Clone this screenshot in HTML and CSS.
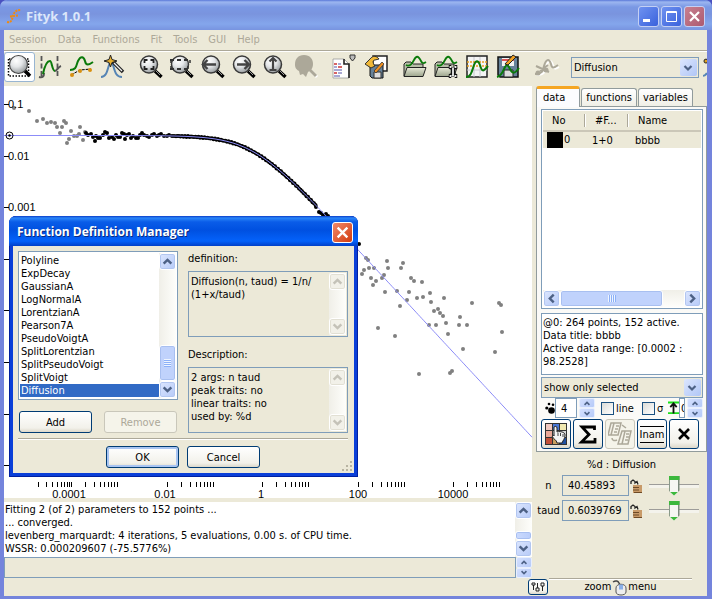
FILE: index.html
```html
<!DOCTYPE html>
<html lang="en">
<head>
<meta charset="utf-8">
<title>Fityk 1.0.1</title>
<link rel="stylesheet" href="styles.css">
</head>
<body>
<svg class="defs" aria-hidden="true">
  <defs>
    <radialGradient id="glass" cx="38%" cy="30%" r="75%">
      <stop offset="0" stop-color="#fff"/><stop offset=".45" stop-color="#e4e6e8"/><stop offset="1" stop-color="#8f9496"/>
    </radialGradient>
    <linearGradient id="folder" x1="0" y1="0" x2="0" y2="1">
      <stop offset="0" stop-color="#e8ead8"/><stop offset="1" stop-color="#9ca48c"/>
    </linearGradient>
    <symbol id="lens" viewBox="0 0 24 24">
      <path d="M16 16l6.500 6" stroke="#000" stroke-width="3.500"/>
      <path d="M17 16l4 4" stroke="#999" stroke-width="1"/>
      <circle cx="10" cy="9.500" r="8.500" fill="url(#glass)" stroke="#3a3a3a" stroke-width="1.500"/>
    </symbol>
    <symbol id="folder-icon" viewBox="0 0 24 24">
      <path d="M1 21V9l2-2h5l2 2h10v3" fill="#b8bea8" stroke="#222"/>
      <path d="M1 21.500L4 12.500h19l-3 9z" fill="url(#folder)" stroke="#222"/>
      <path d="M3 10c4 2 6-1 8-5s4-5 7 1c1 2 2 3 5 1" fill="none" stroke="#0a7a0a" stroke-width="1.800"/>
    </symbol>
    <symbol id="up" viewBox="0 0 10 10"><path d="M1.500 7L5 3.500 8.500 7" fill="none" stroke="currentColor" stroke-width="2.200"/></symbol>
    <symbol id="down" viewBox="0 0 10 10"><path d="M1.500 3L5 6.500 8.500 3" fill="none" stroke="currentColor" stroke-width="2.200"/></symbol>
    <symbol id="left" viewBox="0 0 10 10"><path d="M7 1.500L3.500 5 7 8.500" fill="none" stroke="currentColor" stroke-width="2.200"/></symbol>
    <symbol id="right" viewBox="0 0 10 10"><path d="M3 1.500L6.500 5 3 8.500" fill="none" stroke="currentColor" stroke-width="2.200"/></symbol>
    <symbol id="cross" viewBox="0 0 12 12"><path d="M1.500 1.500l9 9M10.500 1.500l-9 9" stroke="#fff" stroke-width="2.200"/></symbol>
    <symbol id="lock" viewBox="0 0 12 14">
      <path d="M1 5V2.500L3 1l2 1.500V4l2-1.500 1 3" fill="none" stroke="#222" stroke-width="1.300"/>
      <rect x="3" y="6" width="9" height="8" fill="#c89a68"/>
      <path d="M3 8.500h6M3 11h6M4 13.500h8" stroke="#6d4a26"/>
    </symbol>
  </defs>
</svg>

<div class="window">
  <header class="titlebar">
    <svg class="logo" viewBox="0 0 16 16"><path d="M1 14c5 1 5-3 6-6s2-6 8-6M4 8.500l8-1" fill="none" stroke="#f08a10" stroke-width="2" stroke-dasharray="2 1"/></svg>
    <h1>Fityk 1.0.1</h1>
    <button class="winbtn" aria-label="Minimize"><svg viewBox="0 0 19 19"><path d="M4 13.500h7" stroke="#fff" stroke-width="3"/></svg></button>
    <button class="winbtn" aria-label="Maximize"><svg viewBox="0 0 19 19"><path d="M4.500 4.500h10v10h-10zM4 5.500h11" fill="none" stroke="#fff"/></svg></button>
    <button class="winbtn winbtn-close" aria-label="Close"><svg viewBox="0 0 19 19"><path d="M5 5l9 9M14 5l-9 9" stroke="#fff" stroke-width="2.200"/></svg></button>
  </header>

  <nav class="menubar">
    <button disabled>Session</button><button disabled>Data</button><button disabled>Functions</button><button disabled>Fit</button><button disabled>Tools</button><button disabled>GUI</button><button disabled>Help</button>
  </nav>

  <div class="toolbar">
    <div class="group">
      <button class="tool pressed" aria-label="Zoom mode"><svg viewBox="0 0 24 24"><path d="M1.500 4v17h20V4z" fill="none" stroke="#000" stroke-width="1.500" stroke-dasharray="1.500 1.500"/><path d="M17 15l6 6" stroke="#000" stroke-width="3.500"/><circle cx="11.500" cy="9.500" r="9" fill="url(#glass)" stroke="#444" stroke-width="1.200"/></svg></button>
      <button class="tool" aria-label="Range mode"><svg viewBox="0 0 24 24"><path d="M3.500 1v22M19.500 1v22" stroke="#555" stroke-width="1.800" stroke-dasharray="5 2.500"/><path d="M1 22c4 1 5-1 5-4" fill="none" stroke="#555" stroke-width="2"/><path d="M5 19c2-10 5-13 7-13s2 10 5 10" fill="none" stroke="#0a7a0a" stroke-width="2"/><path d="M17 16c2 0 3-4 6-5" fill="none" stroke="#555" stroke-width="2"/></svg></button>
      <button class="tool" aria-label="Baseline mode"><svg viewBox="0 0 24 24"><path d="M2 20l9-5 11-1" fill="none" stroke="#000" stroke-dasharray="3 1"/><path d="M1 15c7 0 6-5 8-9 3-6 6-4 7 0 1 5 4 4 8 1" fill="none" stroke="#0a7a0a" stroke-width="2"/><circle cx="3" cy="20" r="2" fill="#d89010"/><circle cx="11" cy="16" r="2" fill="#d89010"/><circle cx="21" cy="15" r="2" fill="#d89010"/></svg></button>
      <button class="tool" aria-label="Add peak mode"><svg viewBox="0 0 24 24"><path d="M1 22c5 0 6-5 8-12 1-4 3-4 4 0 2 7 3 12 9 12" fill="none" stroke="#5685b5" stroke-width="2"/><path d="M13 7l10 10" stroke="#222" stroke-width="3.500"/><path d="M14 8l8 8" stroke="#eee" stroke-width="1.200"/><path d="M10.500 0l1.500 4.500 5 1.500-5 1.500-1.500 4.500L9 7.500 4 6l5-1.500z" fill="#e8b030" stroke="#222"/></svg></button>
    </div>
    <div class="group">
      <button class="tool" aria-label="Zoom all"><svg viewBox="0 0 24 24"><use href="#lens"/><path d="M5.500 8V5h3M11.500 5h3v3M14.500 11v3h-3M8.500 14h-3v-3" fill="none" stroke="#222" stroke-width="1.800"/></svg></button>
      <button class="tool" aria-label="Fit width"><svg viewBox="0 0 24 24"><use href="#lens"/><path d="M0 5h21M0 14h21" stroke="#333" stroke-width="1.800" stroke-dasharray="4 3"/><path d="M1 5v3M20 5v3M1 14v-3M18 14v-3" stroke="#333" stroke-width="1.500"/></svg></button>
      <button class="tool" aria-label="Scroll left"><svg viewBox="0 0 24 24"><use href="#lens"/><path d="M15 9.500H2M6.500 5L2 9.500 6.500 14" fill="none" stroke="#444" stroke-width="2.400"/></svg></button>
      <button class="tool" aria-label="Scroll right"><svg viewBox="0 0 24 24"><use href="#lens"/><path d="M5 9.500h12M12.500 5L17 9.500 12.500 14" fill="none" stroke="#444" stroke-width="2.400"/></svg></button>
      <button class="tool" aria-label="Fit height"><svg viewBox="0 0 24 24"><use href="#lens"/><path d="M10 3v12M6.500 6.500L10 3l3.500 3.500M6.500 15h7" fill="none" stroke="#444" stroke-width="2.200"/></svg></button>
      <button class="tool" aria-label="Previous zoom" disabled><svg viewBox="0 0 24 24"><path d="M16 15l7 7" stroke="#fff" stroke-width="3"/><path d="M16 15l6 6" stroke="#aca899" stroke-width="3"/><path d="M10 0c6 0 9 4 9 9s-3 7-5 8l-2 5-3-3-3 1-1-4c-4-2-4-5-4-7 0-5 3-9 9-9z" fill="#aca899"/></svg></button>
    </div>
    <div class="group">
      <button class="tool" aria-label="Run script"><svg viewBox="0 0 24 24"><path d="M0 4h11l5 5v14H0z" fill="#fff" stroke="#999" stroke-width=".8"/><path d="M11 4v5h5v14" fill="none" stroke="#222" stroke-width="1.600"/><path d="M1 9h3M5 12h4M1 18h3" stroke="#c33" stroke-width="1.500"/><path d="M5 9h3M1 12h3M1 15h8M5 18h4M1 21h6" stroke="#55a" stroke-width="1.200"/><path d="M17 0h5v3l-2.500 3L17 3z" fill="#bbb" stroke="#333"/></svg></button>
      <button class="tool" aria-label="Save session"><svg viewBox="0 0 24 24"><path d="M9 1h14v15H9z" fill="#fff" stroke="#222" stroke-width="1.500"/><path d="M6 10h13v13H8l-2-2z" fill="#67829a" stroke="#111"/><path d="M10 17h7v6h-7z" fill="#ddd" stroke="#333"/><path d="M1 9l5-5c3-4 7-3 9 0l-4 1c-3 0-2 4 0 6l-4 2z" fill="#f0b838" stroke="#333"/><path d="M10 16l8-9 2 2-8 9z" fill="#f09020" stroke="#333" stroke-width=".8"/></svg></button>
    </div>
    <div class="group">
      <button class="tool" aria-label="Load data"><svg viewBox="0 0 24 24"><use href="#folder-icon"/></svg></button>
      <button class="tool" aria-label="Load data with options"><svg viewBox="0 0 24 24"><use href="#folder-icon"/><path d="M16 10v3l2 1v5l-2 1v3M22 10v3l-2 1v5l2 1v3" fill="none" stroke="#111" stroke-width="2.500"/><path d="M19 12.500v9M16.500 11v2M21.500 11v2M16.500 20v2M21.500 20v2" stroke="#eee" stroke-width="1.800"/></svg></button>
      <button class="tool" aria-label="Edit data"><svg viewBox="0 0 24 24"><path d="M2 1h20v21H2z" fill="#f4f4f4" stroke="#222" stroke-width="1.500"/><path d="M2 15h20M9 2v20M15 2v20" stroke="#c8c8d0"/><path d="M2 7h20M2 11h20" stroke="#e8a020" stroke-width="1.500" stroke-dasharray="2 1"/><path d="M1 22c5 0 6-6 8-12 2-5 4-5 6 0 2 7 3 7 8 1" fill="none" stroke="#0a7a0a" stroke-width="2"/></svg></button>
      <button class="tool" aria-label="Save image"><svg viewBox="0 0 24 24"><path d="M2 2h20v20H4l-2-2z" fill="#67829a" stroke="#111" stroke-width="1.500"/><path d="M6 3h12v8H6z" fill="#f2f2f2"/><path d="M6 5h12" stroke="#d55" stroke-width="2"/><path d="M8 15h9v7H8z" fill="#ddd" stroke="#222"/><path d="M1 22c5-1 6-6 8-10 2-3 3-2 5 2s4 6 9-1" fill="none" stroke="#0a7a0a" stroke-width="2"/><path d="M9 9l8-9 3 2-8 8z" fill="#f0a020" stroke="#222"/></svg></button>
    </div>
    <div class="group">
      <button class="tool" aria-label="Automatic peak" disabled><svg viewBox="0 0 24 24"><path d="M2 20c8 0 8-4 9-8 2-7 5-8 7-2 1 5 3 4 6 2" fill="none" stroke="#fff" stroke-width="2"/><path d="M0 19c8 0 8-4 9-8 2-7 5-8 7-2 1 5 3 4 7 1M1 11l13 6M5 16l8-6" fill="none" stroke="#aca899" stroke-width="2"/><circle cx="3" cy="18" r="2.500" fill="#aca899"/><circle cx="11" cy="15" r="2.500" fill="#aca899"/></svg></button>
    </div>
    <div class="combo type-combo">
      <select aria-label="Function type"><option>Diffusion</option></select>
      <span class="knob"><svg><use href="#down"/></svg></span>
    </div>
    <svg class="overflow-icon" viewBox="0 0 4 24"><circle cx="3" cy="6" r="2" fill="#e0a020" stroke="#222"/><path d="M0 21c2 0 3-1 4-3" fill="none" stroke="#5685b5" stroke-width="2"/></svg>
  </div>

  <div class="content">
    <main class="work">
      <div class="plot-area">
        <svg id="plot" viewBox="4 86 528 412" preserveAspectRatio="xMinYMin meet" role="img" aria-label="Data plot"></svg>
      </div>
      <section class="console">
        <pre class="log">Fitting 2 (of 2) parameters to 152 points ...
... converged.
levenberg_marquardt: 4 iterations, 5 evaluations, 0.00 s. of CPU time.
WSSR: 0.000209607 (-75.5776%)</pre>
        <div class="vscroll">
          <button aria-label="Scroll up"><svg><use href="#up"/></svg></button>
          <span class="thumb log-thumb"></span>
          <button aria-label="Scroll down"><svg><use href="#down"/></svg></button>
        </div>
      </section>
      <div class="command">
        <input type="text" aria-label="Command">
        <span class="spin"><button aria-label="Previous command"><svg><use href="#up"/></svg></button><button aria-label="Next command"><svg><use href="#down"/></svg></button></span>
      </div>
    </main>

    <aside class="side">
      <div class="tabs" role="tablist">
        <button class="tab active" role="tab" aria-selected="true">data</button>
        <button class="tab" role="tab">functions</button>
        <button class="tab" role="tab">variables</button>
      </div>
      <div class="panel">
        <div class="datasets">
          <table>
            <colgroup><col class="c-no"><col class="c-f"><col></colgroup>
            <thead><tr><th>No</th><th>#F...</th><th>Name</th></tr></thead>
            <tbody><tr><td><span class="swatch"></span>0</td><td>1+0</td><td>bbbb</td></tr></tbody>
          </table>
          <div class="hscroll">
            <button aria-label="Scroll left"><svg><use href="#left"/></svg></button>
            <span class="thumb"></span>
            <button aria-label="Scroll right"><svg><use href="#right"/></svg></button>
          </div>
        </div>
        <div class="info">@0: 264 points, 152 active.<br>Data title: bbbb<br>Active data range: [0.0002 : 98.2528]</div>
        <div class="combo">
          <select aria-label="Visible datasets"><option>show only selected</option></select>
          <span class="knob"><svg><use href="#down"/></svg></span>
        </div>
        <div class="options">
          <svg class="dots" viewBox="0 0 10 12"><circle cx="6.500" cy="8.500" r="3.300"/><circle cx="1.800" cy="6" r="1.600"/><circle cx="4" cy="2" r="1.300"/><circle cx="8" cy="2.800" r="1.300"/></svg>
          <input class="num" type="text" value="4" aria-label="Point size">
          <span class="spin"><button aria-label="Larger points"><svg><use href="#up"/></svg></button><button aria-label="Smaller points"><svg><use href="#down"/></svg></button></span>
          <label class="check"><input type="checkbox">line</label>
          <label class="check"><input type="checkbox">σ</label>
          <svg class="shift" viewBox="0 0 12 14"><path d="M0 1h12M0 12.500h12" stroke="#1be01b" stroke-width="2"/><path d="M6 13V3M2.500 6L6 2l3.500 4" fill="none" stroke="#111" stroke-width="2"/></svg>
          <input class="num shift-num" type="text" value="0" aria-label="Shift">
          <span class="spin"><button aria-label="Shift up"><svg><use href="#up"/></svg></button><button aria-label="Shift down"><svg><use href="#down"/></svg></button></span>
        </div>
        <div class="actions">
          <button class="xp" aria-label="Colours"><svg viewBox="0 0 24 24"><path d="M1 1h22v22H1z" fill="#333"/><path d="M2 2h6v6H2z" fill="#f0c8c0"/><path d="M9 2h6v6H9z" fill="#4a78d8"/><path d="M16 2h6v6h-6z" fill="#f0e8b0"/><path d="M2 9h6v6H2z" fill="#e8a898"/><path d="M9 9h6v6H9zM16 9h6v6h-6z" fill="#d8d8d8"/><path d="M2 16h6v6H2z" fill="#c05038"/><path d="M9 16h6v6H9z" fill="#c8a060"/><path d="M16 16h6v6h-6z" fill="#2050a0"/><path d="M10 5c1-1 3-1 3 1v4c3-1 8 0 8 3 0 4-2 5-3 8h-5c0-3-4-4-5-7 1-1 2-1 2 0z" fill="#f4f4f4" stroke="#222"/><path d="M14 11v3M16.500 11v3M19 12v3" stroke="#444"/></svg></button>
          <button class="xp" aria-label="Sum"><svg viewBox="0 0 24 24"><path d="M18.500 8V5H6l7 7.500L5.500 20H19v-4" fill="none" stroke="#000" stroke-width="2.800"/></svg></button>
          <button class="xp" aria-label="Copy" disabled><svg viewBox="0 0 24 24"><path d="M3 1h10l-3 12H0zM14 9h9l-3 13H10z" fill="none" stroke="#aca899" stroke-width="1.500"/><path d="M6 1L3 13M8 4h3M7 7h3M6 10h3M17 9l-3 13M18 12h3M18 15h3M17 18h3M4 16c0 3 3 3 5 2M14 3l4 3" fill="none" stroke="#aca899" stroke-width="1.500"/></svg></button>
          <button class="xp rename">Inam</button>
          <button class="xp" aria-label="Delete"><svg viewBox="0 0 24 24"><path d="M7 7l10 10M17 7L7 17" stroke="#000" stroke-width="2.600"/></svg></button>
        </div>
      </div>

      <section class="params">
        <h2>%d : Diffusion</h2>
        <div class="param"><label for="p-n">n</label><input id="p-n" type="text" value="40.45893"><svg class="lock"><use href="#lock"/></svg><input type="range" aria-label="n slider"></div>
        <div class="param"><label for="p-taud">taud</label><input id="p-taud" type="text" value="0.6039769"><svg class="lock"><use href="#lock"/></svg><input type="range" aria-label="taud slider"></div>
      </section>
    </aside>
  </div>

  <footer class="status">
    <button class="xp conf" aria-label="Status bar settings"><svg viewBox="0 0 14 10"><path d="M1 1h3v2H1zM2.500 3v5M5 6h3v3H5zM6.500 1v5M10 1h3v3h-3zM11.500 4v5" fill="none" stroke="#222"/></svg></button>
    <p class="hint">zoom<svg class="mouse" viewBox="0 0 15 16"><path d="M1 2c3-2 5-1 6 1l1 2" fill="none" stroke="#444" stroke-width="1.500"/><path d="M4 8c0-5 10-5 10 0v4c0 4-10 4-10 0z" fill="#eee" stroke="#555"/><path d="M7 4.500h4v5H7z" fill="#8ab0e8"/></svg>menu</p>
  </footer>
</div>

<div class="dialog" role="dialog" aria-labelledby="dlg-title">
  <header class="dlg-title">
    <h2 id="dlg-title">Function Definition Manager</h2>
    <button class="dlg-close" aria-label="Close"><svg><use href="#cross"/></svg></button>
  </header>
  <div class="dlg-body">
    <div class="dlg-cols">
      <div class="dlg-left">
        <div class="listbox">
          <select size="11" aria-label="Functions">
            <option>Polyline</option><option>ExpDecay</option><option>GaussianA</option><option>LogNormalA</option><option>LorentzianA</option><option>Pearson7A</option><option>PseudoVoigtA</option><option>SplitLorentzian</option><option>SplitPseudoVoigt</option><option>SplitVoigt</option><option selected>Diffusion</option>
          </select>
          <div class="vscroll">
            <button aria-label="Scroll up"><svg><use href="#up"/></svg></button>
            <span class="thumb list-thumb"></span>
            <button aria-label="Scroll down"><svg><use href="#down"/></svg></button>
          </div>
        </div>
        <div class="row"><button class="xp">Add</button><button class="xp" disabled>Remove</button></div>
      </div>
      <div class="dlg-right">
        <label for="definition">definition:</label>
        <div class="textbox">
          <textarea id="definition" readonly>Diffusion(n, taud) = 1/n/
(1+x/taud)</textarea>
          <div class="vscroll off"><button disabled aria-label="Scroll up"><svg><use href="#up"/></svg></button><button disabled aria-label="Scroll down"><svg><use href="#down"/></svg></button></div>
        </div>
        <label for="description">Description:</label>
        <div class="textbox">
          <textarea id="description" readonly>2 args: n taud
peak traits: no
linear traits: no
used by: %d</textarea>
          <div class="vscroll off"><button disabled aria-label="Scroll up"><svg><use href="#up"/></svg></button><button disabled aria-label="Scroll down"><svg><use href="#down"/></svg></button></div>
        </div>
      </div>
    </div>
    <div class="dlg-actions"><button class="xp default">OK</button><button class="xp">Cancel</button></div>
    <svg class="grip" viewBox="0 0 12 12"><path d="M9 2h2M5 6h2M9 6h2M1 10h2M5 10h2M9 10h2" stroke="#b8b4a2" stroke-width="2"/></svg>
  </div>
</div>
<script src="plot.js"></script>
</body>
</html>
```
FILE: styles.css
```css
* { box-sizing: border-box; }
html { background: #4a52c0; }
body {
  margin: 0;
  font: 11px/13px "DejaVu Sans Condensed", "Noto Sans", sans-serif;
  color: #000;
}
button, input, select, textarea { font: inherit; color: inherit; margin: 0; padding: 0; }
button { border: 0; background: none; }
h1, h2, p, pre { margin: 0; }
svg { display: block; }
.defs { position: absolute; width: 0; height: 0; }

.window {
  display: flex;
  flex-direction: column;
  min-height: 100vh;
  background: #ece9d8;
  border: solid #7484dc;
  border-width: 0 5px 4px 4px;
  border-radius: 7px 7px 0 0;
}

/* title bar */
.titlebar {
  display: flex;
  align-items: center;
  gap: 2px;
  height: 30px;
  margin: 0 -5px 0 -4px;
  padding: 2px 7px 0 6px;
  border-radius: 7px 7px 0 0;
  background: linear-gradient(#5a78d8 0, #9cb6f0 2px, #7a98e4 7px, #7a94de 14px, #84a6ec 24px, #7894e0 30px);
}
.logo { width: 16px; height: 16px; }
.titlebar h1 {
  flex: 1;
  padding-left: 2px;
  font: bold 13px/20px "Open Sans", sans-serif;
  color: #dce6fa;
}
.winbtn {
  width: 21px;
  height: 21px;
  border: 1px solid #c4d0f4;
  border-radius: 3px;
  background: linear-gradient(135deg, #6f92f0, #3a62dc);
}
.winbtn-close { background: linear-gradient(135deg, #c88090, #ac5a70); }

/* menu */
.menubar {
  display: flex;
  gap: 11px;
  height: 20px;
  padding: 0 5px 2px;
}
.menubar button { color: #aca899; }

/* toolbar */
.toolbar {
  display: flex;
  gap: 8px;
  height: 36px;
  padding-top: 1px;
  border-top: 1px solid #aca899;
  box-shadow: inset 0 1px #fff;
  overflow: hidden;
}
.group { display: flex; }
.tool {
  width: 31px;
  height: 30px;
  padding: 2px 4px 2px 2px;
  border: 1px solid transparent;
}
.tool svg { width: 24px; height: 24px; overflow: visible; fill: #000; }
.pressed { background: #fff; border-color: #98b5d2; border-radius: 3px; }
.type-combo { width: 130px; margin-top: 5px; }
.overflow-icon { width: 4px; height: 24px; margin: 3px 0 0 -4px; }

.combo {
  display: flex;
  height: 21px;
  border: 1px solid #7f9db9;
  background: #ece9d8;
}
.combo select {
  flex: 1;
  min-width: 0;
  border: 0;
  padding-left: 2px;
  appearance: none;
  background: none;
}
.knob {
  width: 17px;
  margin: 1px;
  padding: 4px 3px;
  border-radius: 2px;
  color: #4d6185;
  background: linear-gradient(135deg, #dce6fe, #b0c6f6);
}
.knob svg { width: 10px; height: 10px; }

/* main areas */
.content { display: grid; grid-template-columns: minmax(0, 1fr) 175px; flex: 1; }
.work { display: flex; flex-direction: column; }
.plot-area { flex: 1; min-height: 0; background: #fff; }
.plot-area svg { width: 100%; overflow: visible; }
.plot-area text { font: 11px "Liberation Sans", sans-serif; }
.console { display: flex; margin-top: 4px; background: #fff; }
.log { flex: 1; min-width: 0; padding: 1px 0 1px 1px; font: inherit; overflow: hidden; }
.command { display: flex; height: 21px; }
.command input { flex: 1; min-width: 0; border: 1px solid #7f9db9; background: #ece9d8; }

/* scroll bars */
.vscroll, .hscroll { display: flex; justify-content: space-between; }
.vscroll { flex-direction: column; width: 17px; background: linear-gradient(90deg, #f0efe8, #fefefb); }
.hscroll { background: linear-gradient(#f0efe8, #fefefb); }
.vscroll button, .hscroll button {
  width: 17px;
  height: 17px;
  padding: 2px;
  border: 1px solid #fff;
  border-radius: 3px;
  box-shadow: inset 0 0 0 1px #b2c6f0;
  color: #4d6185;
  background: linear-gradient(135deg, #dce6fe, #b6caf8);
}
.vscroll button svg, .hscroll button svg { width: 11px; height: 11px; }
.thumb {
  border: 1px solid #fff;
  border-radius: 3px;
  box-shadow: inset 0 0 0 1px #a8bff0;
  background: linear-gradient(90deg, #cbdafd, #b9cdfb);
}
.log-thumb { height: 9px; margin-top: 12px; }
.list-thumb { height: 39px; margin-top: 75px; background: repeating-linear-gradient(#eef4fe 0 1px, #8cb0f8 1px 2px) center / 7px 8px no-repeat, #c0d2fc; }
.hscroll .thumb { width: 104px; margin-right: 21px; background: repeating-linear-gradient(90deg, #eef4fe 0 1px, #8cb0f8 1px 2px) center / 8px 7px no-repeat, #c0d2fc; }
.off { margin: 1px 1px 1px 0; }
.vscroll.off button { color: #c4c2b8; background: #f2f1e9; box-shadow: inset 0 0 0 1px #e2e0d4; }

.spin { display: flex; flex-direction: column; width: 16px; }
.spin button {
  flex: 1;
  width: 16px;
  border: 1px solid #e8effe;
  border-radius: 2px;
  color: #4d6185;
  background: linear-gradient(135deg, #d4e0fe, #b6caf8);
}
.spin svg { width: 8px; height: 7px; margin: 0 auto; }

/* side panel */
.side { padding: 0 0 0 4px; }
.tabs { display: flex; gap: 1px; align-items: flex-end; height: 20px; }
.tab {
  height: 18px;
  padding: 0 4px;
  border: 1px solid #919b9c;
  border-bottom: 0;
  border-radius: 3px 3px 0 0;
  background: linear-gradient(#fff, #f0efe6);
}
.tab.active {
  height: 21px;
  margin-bottom: -1px;
  padding: 0 14px 2px 6px;
  border-top: 3px solid #f5a623;
  background: #fcfcfe;
}
.panel {
  display: flex;
  flex-direction: column;
  width: 171px;
  padding: 2px 3px 2px 4px;
  border: 1px solid #919b9c;
  background: #fbfaf7;
}
.datasets {
  display: flex;
  flex-direction: column;
  height: 200px;
  padding: 1px;
  border: 1px solid #7f9db9;
  background: #fff;
}
table { width: 100%; table-layout: fixed; border-collapse: collapse; }
.c-no { width: 43px; }
.c-f { width: 43px; }
th, td { height: 17px; padding: 0 0 0 8px; text-align: left; font-weight: normal; background: #ece9d8; white-space: nowrap; }
th { height: 20px; padding-left: 9px; border-bottom: 2px solid #cbc7b8; background: linear-gradient(90deg, transparent calc(100% - 2px), #aca899 0 calc(100% - 1px), #fff 0) center / 100% 13px no-repeat, #ece9d8; }
th:last-child { background: #ece9d8; }
td:first-child { padding-left: 4px; }
td:nth-child(2), td:nth-child(3) { padding-left: 6px; }
.swatch { display: inline-block; width: 16px; height: 16px; margin-right: 1px; vertical-align: middle; background: #000; }
.hscroll { margin-top: auto; }
.info { height: 62px; margin-top: 4px; padding: 2px 1px; border: 1px solid #7f9db9; background: #fff; }
.panel .combo { margin-top: 2px; }

.options { display: flex; align-items: center; height: 20px; }
.dots { width: 10px; height: 12px; margin: 0 0 0 4px; }
.num { width: 22px; height: 20px; padding-left: 5px; border: 1px solid #7f9db9; background: #fff; }
.options .spin { height: 20px; margin-left: 2px; }
.check { display: flex; align-items: center; gap: 2px; margin-left: 6px; }
.check + .check { margin-left: 8px; }
.check input {
  width: 13px;
  height: 13px;
  appearance: none;
  border: 1px solid #1c5180;
  background: linear-gradient(135deg, #dcdcd7, #fff);
}
.shift { width: 11px; height: 14px; margin-left: auto; }
.options .shift-num { width: 6px; padding-left: 1px; }

.actions { display: flex; gap: 2px; margin-top: 1px; }
.xp {
  height: 22px;
  border: 1px solid #003c74;
  border-radius: 3px;
  background: linear-gradient(#fff, #f2f1ea 80%, #dcd8ca);
}
.xp:disabled { border-color: #c9c7ba; color: #aca899; background: #f5f4ea; }
.actions .xp { width: 30px; height: 30px; padding: 2px; overflow: hidden; }
.actions svg { width: 24px; height: 24px; }
.actions .rename { padding: 0; }
.rename::before, .rename::after { content: ""; display: block; height: 1px; margin: 1px 2px; background: #000; }

.params { display: flex; flex-direction: column; gap: 4px; padding-top: 6px; }
.params h2 { text-align: center; font: inherit; }
.param { display: flex; align-items: center; height: 21px; }
.param label { width: 25px; text-align: center; }
.param input[type="text"] { width: 67px; height: 21px; padding-left: 5px; margin-left: 1px; border: 1px solid #7f9db9; background: #ece9d8; }
.lock { width: 12px; height: 14px; margin-left: 1px; }
input[type="range"] { width: 50px; height: 20px; margin-left: 7px; appearance: none; background: linear-gradient(#9d9c99 0 1px, #f4f3ec 0) center / 100% 4px no-repeat; }
input[type="range"]::-webkit-slider-thumb {
  appearance: none;
  width: 11px;
  height: 20px;
  clip-path: polygon(0 0, 100% 0, 100% 75%, 50% 100%, 0 75%);
  background: linear-gradient(#3cb83c 4px, transparent 0), linear-gradient(transparent 16px, #3cb83c 0), linear-gradient(90deg, #8a9a8a 0 1px, #f6f6f2 0 9px, #7d8a7d 0);
}

/* status line */
.status { display: flex; justify-content: flex-end; height: 18px; }
.conf { width: 20px; height: 16px; margin-top: 1px; padding: 2px; }
.conf svg { width: 14px; height: 10px; }
.hint { display: flex; justify-content: center; width: 143px; margin: 0 15px 0 1px; padding-top: 1px; border-top: 1px solid #aca899; box-shadow: inset 0 1px #fff; }
.mouse { width: 15px; height: 16px; margin: 0 1px; }

/* dialog floating over the plot */
.dialog {
  position: absolute;
  left: 9px;
  top: 216px;
  width: 349px;
  border-radius: 7px 7px 0 0;
  padding: 0 4px 4px;
  background: #0a3fd8;
  box-shadow: inset 0 0 0 1px #0020a0;
}
.dlg-title {
  display: flex;
  align-items: center;
  height: 30px;
  margin: 0 -4px;
  padding: 2px 5px 0 8px;
  border-radius: 7px 7px 0 0;
  background: linear-gradient(#0a3cc8 0, #2a86f8 2px, #0a5ce8 6px, #0050e0 14px, #0462fa 25px, #0240c8 30px);
}
.dlg-title h2 { flex: 1; font: bold 12px/20px "Open Sans", sans-serif; color: #fff; text-shadow: 1px 1px #0a2a80; }
.dlg-close { width: 21px; height: 21px; padding: 3px; border: 1px solid #fff; border-radius: 3px; background: linear-gradient(135deg, #f0886a, #d23c10); }
.dlg-close svg { width: 13px; height: 13px; }
.dlg-body { position: relative; padding: 5px 6px 5px 5px; background: #ece9d8; }
.dlg-cols { display: flex; gap: 10px; padding-bottom: 5px; border-bottom: 1px solid #aca899; box-shadow: 0 1px #fff; }
.dlg-left { width: 160px; }
.listbox { display: flex; height: 149px; padding: 1px; border: 1px solid #7f9db9; background: #fff; }
.listbox select { flex: 1; min-width: 0; border: 0; padding: 1px 0; overflow: hidden; background: #fff; }
.listbox option { height: 13px; min-height: 13px; padding: 0 0 0 1px; line-height: 13px; }
.listbox option:checked { color: #fff; background: linear-gradient(#316ac5, #316ac5); }
.row { display: flex; gap: 12px; margin: 11px 1px 0; }
.row .xp, .dlg-actions .xp { width: 73px; }
.dlg-right { flex: 1; min-width: 0; }
.dlg-right label { display: block; height: 20px; line-height: 13px; padding-top: 1px; }
.textbox { display: flex; height: 66px; border: 1px solid #7f9db9; }
.dlg-right .textbox + label { height: 30px; padding-top: 11px; }
.textbox textarea { flex: 1; min-width: 0; padding: 3px 2px; border: 0; resize: none; overflow: hidden; background: none; }
.dlg-actions { display: flex; justify-content: center; gap: 8px; margin-top: 7px; }
.default { box-shadow: inset 0 0 0 2px #a9c5f2; }
.grip { position: absolute; right: 1px; bottom: 1px; width: 12px; height: 12px; }
```
FILE: plot.js
```js
const NS = 'http://www.w3.org/2000/svg';
const plot = document.getElementById('plot');

function add(tag, attrs, text) {
  const el = document.createElementNS(NS, tag);
  for (const k in attrs) el.setAttribute(k, attrs[k]);
  if (text) el.textContent = text;
  plot.appendChild(el);
}

// model: 1 / n / (1 + x / taud) on log-log axes
const model = x => 135.5 + 51.5 * Math.log10(1 + Math.pow(10, (x - 252) / 47.8));

const inactive = [
  [14, 108], [29, 111], [37, 121], [43, 119], [47, 123], [51, 122], [55, 123], [57, 127], [62, 127],
  [64, 121], [66, 123], [60, 133], [71, 131], [67, 143], [69, 139], [80, 127], [74, 136], [77, 136],
  [79, 134], [83, 140], [85, 132], [366, 258], [368, 260], [387, 261], [403, 263], [364, 270], [369, 268],
  [374, 268], [388, 268], [401, 268], [362, 274], [371, 278], [376, 281], [382, 278], [384, 275], [373, 285],
  [411, 278], [414, 281], [422, 282], [385, 292], [397, 291], [409, 292], [430, 293], [400, 306], [407, 300],
  [417, 298], [423, 297], [431, 302], [444, 298], [472, 303], [499, 303], [501, 305], [434, 311], [438, 309],
  [440, 313], [443, 316], [446, 323], [460, 317], [429, 325], [436, 325], [459, 325], [467, 325], [378, 328],
  [395, 336], [448, 334], [502, 332], [463, 349], [495, 352], [419, 374], [450, 373], [452, 371]
];
const active = [
  [86, 133], [88, 135], [91, 134], [93, 137], [95, 141], [96, 136], [98, 138], [100, 138], [103, 135],
  [105, 132], [107, 133], [109, 138], [112, 137], [114, 139], [116, 135], [118, 137], [120, 137], [122, 133],
  [124, 134], [125, 139], [127, 135], [129, 134], [131, 138], [133, 136], [136, 138], [138, 138], [140, 135],
  [142, 133], [144, 135], [147, 136], [149, 137], [152, 135], [154, 134], [157, 136], [159, 135], [161, 134],
  [164, 136], [167, 136], [169, 135], [172, 136], [174, 136], [316, 207], [319, 212], [321, 213], [323, 215],
  [326, 214], [328, 216], [359, 244]
];
for (let x = 176; x < 316; x += 1.5) active.push([x, model(x) + Math.sin(x * 2.3) * 0.5]);

inactive.forEach(([x, y]) => add('circle', { cx: x, cy: y, r: 2, fill: '#808080' }));
active.forEach(([x, y]) => add('circle', { cx: x, cy: y, r: 2, fill: '#000' }));

let line = '';
for (let x = 4; x <= 532; x += 2) line += (line ? 'L' : 'M') + x + ' ' + model(x).toFixed(1);
add('path', { d: line, fill: 'none', stroke: '#8c8cf8', 'stroke-width': 1 });

add('circle', { cx: 9.5, cy: 135.5, r: 3.5, fill: 'none', stroke: '#000' });
add('circle', { cx: 9.5, cy: 135.5, r: 1.2, fill: '#000' });

// y axis
const yLabels = ['0.1', '0.01', '0.001'];
for (let i = 0; i < 8; i++) {
  const y = Math.round(104 + i * 51.6);
  add('path', { d: `M4 ${y + 0.5}h5`, stroke: '#000' });
  if (yLabels[i]) add('text', { x: 8, y: y + 4 }, yLabels[i]);
}

// x axis
const tick = x => add('path', { d: `M${Math.round(x) + 0.5} 482v5`, stroke: '#000' });
for (let k = 2; k < 10; k++) tick(23.5 + 47.8 * Math.log10(k));
[[71, '0.0001', 69], [167, '0.01', 165], [262, '1', 261], [358, '100', 358], [453, '10000', 453]].forEach(([x, text, at]) => {
  for (let k = 1; k < 10; k++) tick(x + 47.8 * Math.log10(k));
  add('text', { x: at, y: 498, 'text-anchor': 'middle' }, text);
});
```
